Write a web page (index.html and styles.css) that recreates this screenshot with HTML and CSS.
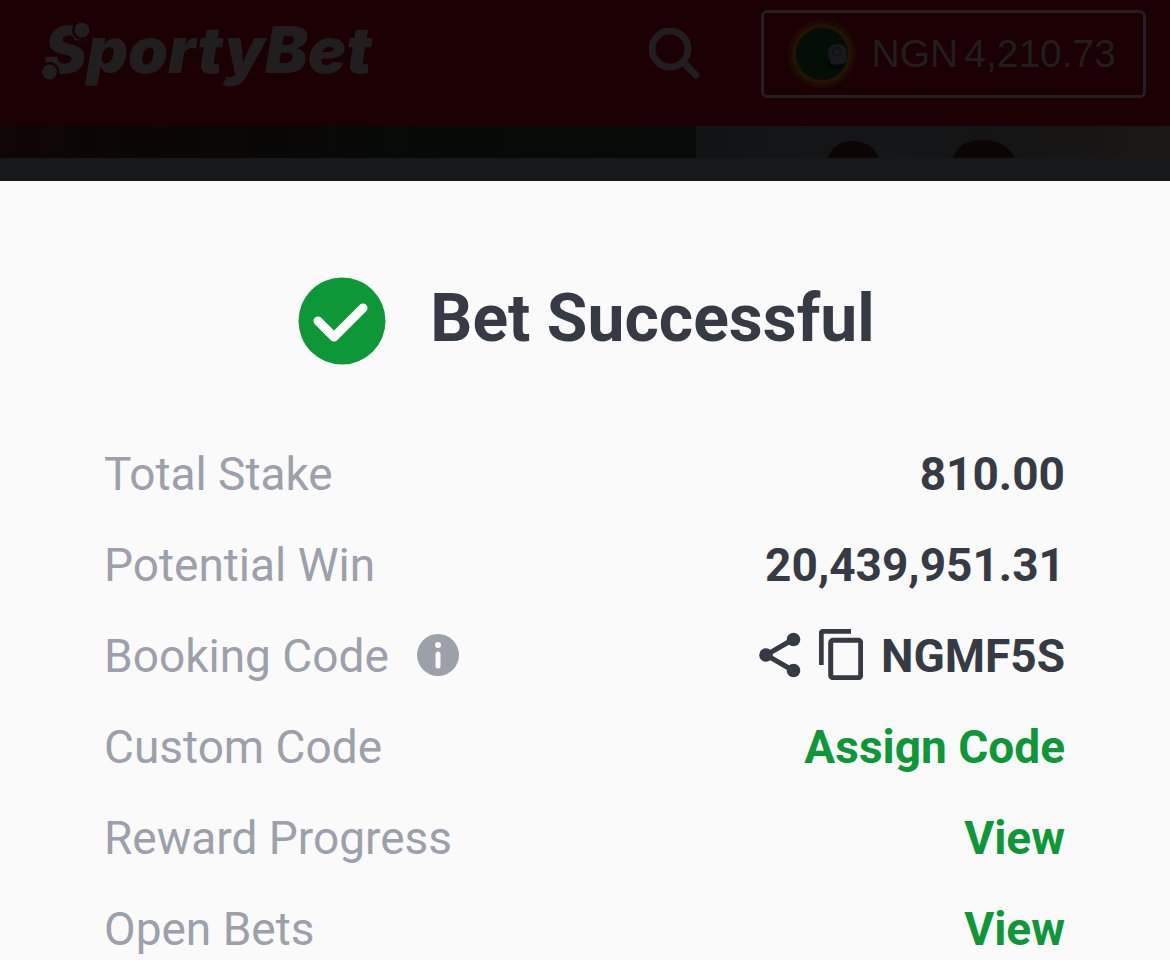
FILE: index.html
```html
<!DOCTYPE html>
<html lang="en">
<head>
<meta charset="utf-8">
<meta name="viewport" content="width=device-width, initial-scale=1">
<title>SportyBet</title>
<link rel="stylesheet" href="styles.css">
</head>
<body>
<header class="topbar">
  <a class="logo" href="#">SportyBet
    <svg class="logo-dots" viewBox="0 0 60 64" aria-hidden="true"><circle class="gap" cx="40" cy="8" r="10"/><circle class="gap" cx="7.500" cy="50" r="10"/><circle cx="40" cy="8" r="7.500"/><circle cx="7.500" cy="50" r="7.500"/></svg>
  </a>
  <button class="search" type="button" aria-label="Search">
    <svg viewBox="0 0 52 52" aria-hidden="true"><circle cx="21" cy="21" r="18"/><path d="M34 34 47 47"/></svg>
  </button>
  <button class="balance" type="button">
    <svg class="avatar" viewBox="0 0 68 68" aria-hidden="true">
      <circle class="avatar-rim" cx="34" cy="34" r="34"/>
      <circle class="avatar-ring" cx="34" cy="34" r="30"/>
      <circle class="avatar-field" cx="34" cy="34" r="26"/>
      <path class="avatar-shade" d="M39 41h18l-4 8H41z"/>
      <path class="avatar-ball" d="M40 34q0-10 9-10 10 0 10 10v8q-7 4-16 2z"/>
      <circle class="avatar-mark" cx="49" cy="32" r="4"/>
    </svg>
    <span class="amount"><span>NGN</span><span>4,210.73</span></span>
  </button>
</header>
<div class="banners" aria-hidden="true">
  <div class="banner banner-left"></div>
  <div class="banner banner-right">
    <svg class="heads" viewBox="0 0 474 32" preserveAspectRatio="xMinYMax slice"><path d="M131 32q8-17 25-17 20 0 27 17z"/><path d="M257 32q6-18 29-18 24 0 33 18z"/></svg>
  </div>
</div>
<div class="strip"></div>
<main class="sheet">
  <div class="result">
    <svg class="tick" viewBox="0 0 88 88" aria-hidden="true"><circle cx="44" cy="44" r="43.5"/><path d="M20 44 36 60 65 31"/></svg>
    <h1 class="title">Bet Successful</h1>
  </div>
  <dl class="details">
    <div class="row"><dt>Total Stake</dt><dd>810.00</dd></div>
    <div class="row"><dt>Potential Win</dt><dd>20,439,951.31</dd></div>
    <div class="row">
      <dt>Booking Code
        <button class="icon-button info" type="button" aria-label="About booking code">
          <svg viewBox="0 0 42 42" aria-hidden="true"><circle class="info-disc" cx="21" cy="21" r="21"/><circle class="info-dot" cx="21" cy="11" r="3"/><path d="M21 20v12"/></svg>
        </button>
      </dt>
      <dd>
        <button class="icon-button share" type="button" aria-label="Share">
          <svg viewBox="0 0 42 46" aria-hidden="true"><path d="M34 7.500 7 23 34 38.500"/><circle cx="34.500" cy="7.500" r="6.800"/><circle cx="7" cy="23" r="6.800"/><circle cx="34.500" cy="38.500" r="6.800"/></svg>
        </button>
        <button class="icon-button copy" type="button" aria-label="Copy">
          <svg viewBox="0 0 44 51" aria-hidden="true"><path d="M2.200 36V5Q2.200 2.200 5 2.200H32"/><rect x="11.700" y="11.200" width="30" height="37.500" rx="2.500"/></svg>
        </button>
        <span>NGMF5S</span>
      </dd>
    </div>
    <div class="row"><dt>Custom Code</dt><dd><a href="#">Assign Code</a></dd></div>
    <div class="row"><dt>Reward Progress</dt><dd><a href="#">View</a></dd></div>
    <div class="row"><dt>Open Bets</dt><dd><a href="#">View</a></dd></div>
  </dl>
</main>
</body>
</html>
```
FILE: styles.css
```css
* { box-sizing: border-box; }
body {
  margin: 0;
  height: 100vh;
  overflow: hidden;
  display: flex;
  flex-direction: column;
  background: #16181b;
  font-family: Roboto, "Liberation Sans", sans-serif;
}
button { padding: 0; border: 0; background: none; color: inherit; font: inherit; cursor: pointer; }
svg { display: block; }

.topbar {
  flex: none;
  display: flex;
  align-items: center;
  padding: 10px 24px 28px 42px;
  background: #1b0103;
  color: #201e1e;
}
.logo {
  position: relative;
  padding-left: 2px;
  margin-bottom: 8px;
  color: inherit;
  font: italic 900 64px/80px Inter, sans-serif;
  text-decoration: none;
}
.logo-dots {
  position: absolute;
  left: 0;
  top: 12px;
  width: 60px;
  fill: #201e1e;
}
.logo-dots .gap { fill: #1b0103; }
.search { margin-left: auto; margin-right: 60px; }
.search svg {
  width: 52px;
  fill: none;
  stroke: #201e1e;
  stroke-width: 7;
  stroke-linecap: round;
}
.balance {
  display: flex;
  align-items: center;
  gap: 16px;
  height: 88px;
  padding: 0 27px 0 24px;
  border: 3px solid #252020;
  border-radius: 6px;
  font: 39px/48px "Liberation Sans", Arial, sans-serif;
}
.amount { display: flex; gap: 6px; }
.avatar { width: 68px; }
.avatar-rim { fill: #1d0a03; }
.avatar-ring { fill: #221303; }
.avatar-field { fill: #030e06; }
.avatar-shade { fill: #020604; }
.avatar-ball { fill: #17191d; }
.avatar-mark { fill: none; stroke: #101216; stroke-width: 2; }

.banners { flex: none; display: flex; height: 32px; }
.banner-left {
  flex: 696;
  background: linear-gradient(90deg, #110506, #0b0604 20%, #090806 45%, #060a06 60%, #070a08);
}
.banner-right {
  flex: 474;
  background: linear-gradient(90deg, #121314, #151617 40%, #141415 60%, #1b1714);
}
.heads { width: 100%; height: 32px; fill: #0d0404; }
.strip { flex: none; height: 23px; background: #16181b; }

.sheet {
  flex: 1 0 auto;
  padding: 96px 105px 0 104px;
  background: #fafafa;
  color: #353a45;
}
.result {
  display: flex;
  align-items: center;
  justify-content: center;
  gap: 44px;
  padding-left: 4px;
}
.tick { width: 88px; fill: #0d9737; }
.tick path {
  fill: none;
  stroke: #fff;
  stroke-width: 9;
  stroke-linecap: round;
  stroke-linejoin: round;
}
.title { margin: 0 0 4px; font-size: 66px; line-height: 80px; font-weight: 700; }

.details { margin: 64px 0 0; }
.row {
  display: flex;
  justify-content: space-between;
  font-size: 46px;
  line-height: 91px;
}
dt, dd { display: flex; align-items: center; margin: 0; }
dt { gap: 28px; color: #9ca0ab; }
dd { gap: 18px; font-weight: 700; }
dd a { color: #0d9737; text-decoration: none; }
.icon-button { flex: none; margin-bottom: 4px; }
.info svg { width: 42px; fill: none; stroke: #fafafa; stroke-width: 5; stroke-linecap: round; }
.info .info-disc { fill: #9ca0ab; stroke: none; }
.info .info-dot { fill: #fafafa; stroke: none; }
.share svg { width: 42px; fill: #353a45; }
.share path { fill: none; stroke: #353a45; stroke-width: 5; }
.copy svg { width: 44px; fill: none; stroke: #353a45; stroke-width: 5; }
```
